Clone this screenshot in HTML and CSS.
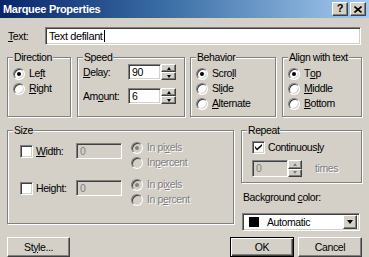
FILE: index.html
```html
<!DOCTYPE html>
<html>
<head>
<meta charset="utf-8">
<title>Marquee Properties</title>
<link rel="stylesheet" href="styles.css">
</head>
<body>
<div class="window">
  <div class="titlebar">
    <span class="title">Marquee Properties</span>
    <div class="tb-btns">
      <span class="tb-btn help">?</span>
      <span class="tb-btn close"><svg width="8" height="7" viewBox="0 0 8 7"><path d="M0.5 0.5 L7.5 6.5 M7.5 0.5 L0.5 6.5" stroke="#000" stroke-width="1.6"/></svg></span>
    </div>
  </div>
  <div class="body">
    <div class="text-row">
      <span class="lbl"><u>T</u>ext:</span>
      <div class="field text-field">Text defilant<span class="caret"></span></div>
    </div>

    <div class="row1">
      <div class="group g-dir">
        <span class="legend">Direction</span>
        <div class="opts">
          <div class="opt"><span class="radio on"></span>Le<u>f</u>t</div>
          <div class="opt"><span class="radio"></span><u>R</u>ight</div>
        </div>
      </div>
      <div class="group g-speed">
        <span class="legend">Speed</span>
        <div class="spin-row">
          <span class="spin-lbl"><u>D</u>elay:</span>
          <div class="field num">90</div>
          <div class="spin"><span class="spin-btn"><span class="arr up"></span></span><span class="spin-btn"><span class="arr down"></span></span></div>
        </div>
        <div class="spin-row">
          <span class="spin-lbl">Am<u>o</u>unt:</span>
          <div class="field num">6</div>
          <div class="spin"><span class="spin-btn"><span class="arr up"></span></span><span class="spin-btn"><span class="arr down"></span></span></div>
        </div>
      </div>
      <div class="group g-beh">
        <span class="legend">Behavior</span>
        <div class="opts">
          <div class="opt"><span class="radio on"></span>Scro<u>l</u>l</div>
          <div class="opt"><span class="radio"></span>Sl<u>i</u>de</div>
          <div class="opt"><span class="radio"></span><u>A</u>lternate</div>
        </div>
      </div>
      <div class="group g-align">
        <span class="legend">Align with text</span>
        <div class="opts">
          <div class="opt"><span class="radio on"></span>T<u>o</u>p</div>
          <div class="opt"><span class="radio"></span><u>M</u>iddle</div>
          <div class="opt"><span class="radio"></span><u>B</u>ottom</div>
        </div>
      </div>
    </div>

    <div class="row2">
      <div class="group g-size">
        <span class="legend">Size</span>
        <div class="size-row">
          <div class="size-left">
            <span class="check"></span>
            <span class="size-lbl"><u>W</u>idth:</span>
            <div class="field dis size-field">0</div>
          </div>
          <div class="opts size-opts">
            <div class="opt dis-text"><span class="radio on dis"></span>In pi<u>x</u>els</div>
            <div class="opt dis-text"><span class="radio dis"></span>In <u>p</u>ercent</div>
          </div>
        </div>
        <div class="size-row">
          <div class="size-left">
            <span class="check"></span>
            <span class="size-lbl">Hei<u>g</u>ht:</span>
            <div class="field dis size-field">0</div>
          </div>
          <div class="opts size-opts">
            <div class="opt dis-text"><span class="radio on dis"></span>In pi<u>x</u>els</div>
            <div class="opt dis-text"><span class="radio dis"></span>In p<u>e</u>rcent</div>
          </div>
        </div>
      </div>

      <div class="right-col">
        <div class="group g-repeat">
          <span class="legend">Repeat</span>
          <div class="opt rep-opt"><span class="check on"><svg width="7" height="7" viewBox="0 0 7 7"><path d="M0 2 L2 4.5 L7 0 L7 2 L2 6.5 L0 4 Z" fill="#000"/></svg></span>Continuous<u>l</u>y</div>
          <div class="rep-times">
            <div class="field dis rep-field">0</div>
            <div class="spin"><span class="spin-btn"><span class="arr up dim"></span></span><span class="spin-btn"><span class="arr down dim"></span></span></div>
            <span class="dis-text times">times</span>
          </div>
        </div>
        <div class="bg-lbl">Background <u>c</u>olor:</div>
        <div class="field select">
          <span class="swatch"></span>
          <span class="sel-text">Automatic</span>
          <span class="drop-btn"><span class="arr down big"></span></span>
        </div>
      </div>
    </div>

    <div class="buttons">
      <div class="btn btn-style">St<u>y</u>le...</div>
      <div class="btn-group">
        <div class="btn btn-ok default">OK</div>
        <div class="btn btn-cancel">Cancel</div>
      </div>
    </div>
  </div>
</div>
</body>
</html>
```

FILE: styles.css
```css
* { box-sizing: border-box; }
html, body { margin: 0; padding: 0; background: #d4d0c8; }
.window {
  width: 369px;
  height: 257px;
  overflow: hidden;
  background: #d4d0c8;
  font-family: "Liberation Sans", Arial, sans-serif;
  font-size: 10.5px;
  letter-spacing: -0.4px;
  color: #000;
  line-height: 13px;
}
u { text-decoration: underline; text-underline-offset: 1px; }

/* title bar */
.titlebar {
  height: 18px;
  background: linear-gradient(to right, #0a246a 0%, #3a6ea5 45%, #a6caf0 100%);
  display: flex;
  align-items: center;
  justify-content: space-between;
  padding: 0 3px 0 3px;
}
.title { color: #fff; font-weight: bold; font-size: 11px; letter-spacing: -0.3px; }
.tb-btns { display: flex; gap: 2px; }
.tb-btn {
  width: 16px; height: 14px;
  background: #d4d0c8;
  border: 1px solid; border-color: #fff #404040 #404040 #fff;
  box-shadow: inset -1px -1px 0 #808080;
  display: flex; align-items: center; justify-content: center;
  font-weight: bold; font-size: 11px; line-height: 11px; letter-spacing: 0;
}
.help { padding-bottom: 1px; }

.body { padding: 9px 7px 0 7px; }

/* text row */
.text-row { display: flex; align-items: center; height: 18px; }
.lbl { width: 38px; padding-left: 1px; }
.field {
  background: #fff;
  border: 1px solid; border-color: #808080 #fff #fff #808080;
  box-shadow: inset 1px 1px 0 #404040, inset -1px -1px 0 #d4d0c8;
  display: flex; align-items: center;
  padding: 0 3px;
}
.text-field { width: 316px; height: 18px; font-size: 11px; }
.caret { display: inline-block; width: 1px; height: 12px; background: #000; margin-left: 1px; }

/* group boxes */
.group {
  position: relative;
  border: 1px solid #808080;
  box-shadow: 1px 1px 0 #fff, inset 1px 1px 0 #fff;
}
.legend {
  position: absolute;
  top: -7px; left: 5px;
  padding: 0 1px;
  background: #d4d0c8;
  line-height: 13px;
  white-space: nowrap;
}

.row1 { display: flex; margin-top: 12px; height: 60px; }
.g-dir { width: 64px; }
.g-speed { width: 108px; margin-left: 6px; }
.g-beh { width: 86px; margin-left: 5px; }
.g-align { width: 80px; margin-left: 6px; }

.opts { display: flex; flex-direction: column; padding: 8px 0 0 5px; }
.opt { display: flex; align-items: center; height: 15px; white-space: nowrap; }

.radio {
  position: relative;
  width: 12px; height: 12px; flex: none;
  border-radius: 50%;
  background: #fff;
  border: 1px solid; border-color: #808080 #fff #fff #808080;
  box-shadow: inset 1px 1px 0 #404040, inset -1px -1px 0 #d4d0c8;
  margin-right: 4px;
}
.radio.on::after {
  content: ""; position: absolute;
  left: 3px; top: 3px; width: 4px; height: 4px;
  border-radius: 50%; background: #000;
}
.radio.dis { background: #d4d0c8; }
.radio.dis.on::after { background: #808080; }

.dis-text { color: #808080; text-shadow: 1px 1px 0 #fff; }

/* speed */
.g-speed { padding: 6px 0 0 5px; }
.spin-row { display: flex; align-items: center; height: 16px; margin-bottom: 8px; }
.spin-lbl { width: 45px; }
.num { width: 33px; height: 16px; }
.spin { display: flex; flex-direction: column; width: 15px; height: 16px; }
.spin-btn {
  flex: 1;
  background: #d4d0c8;
  border: 1px solid; border-color: #fff #404040 #404040 #fff;
  box-shadow: inset -1px -1px 0 #808080;
  display: flex; align-items: center; justify-content: center;
}
.arr { width: 0; height: 0; border-left: 2.5px solid transparent; border-right: 2.5px solid transparent; }
.arr.up { border-bottom: 3px solid #000; }
.arr.down { border-top: 3px solid #000; }
.arr.dim.up { border-bottom-color: #808080; }
.arr.dim.down { border-top-color: #808080; }

/* row 2 */
.row2 { display: flex; margin-top: 13px; }
.g-size { width: 227px; height: 94px; padding: 9px 0 0 12px; }
.size-row { display: flex; height: 30px; margin-bottom: 7px; }
.size-left { display: flex; align-items: center; height: 16px; margin-top: 3px; width: 111px; }
.check {
  width: 13px; height: 13px; flex: none;
  background: #fff;
  border: 1px solid; border-color: #808080 #fff #fff #808080;
  box-shadow: inset 1px 1px 0 #404040, inset -1px -1px 0 #d4d0c8;
  display: flex; align-items: center; justify-content: center;
}
.size-lbl { width: 43px; padding-left: 3px; }
.dis { background: #d4d0c8; color: #808080; }
.size-field { width: 46px; height: 16px; }
.size-opts { padding: 0; }

.right-col { width: 121px; margin-left: 7px; }
.g-repeat { height: 53px; padding: 9px 0 0 10px; }
.rep-opt .check { margin-right: 3px; }
.rep-times { display: flex; align-items: center; margin-top: 5px; }
.rep-field { width: 36px; height: 17px; }
.rep-times .spin { width: 14px; height: 17px; }
.times { margin-left: 13px; }
.bg-lbl { margin-top: 8px; padding-left: 2px; height: 14px; }
.select { margin-top: 8px; margin-left: 1px; width: 118px; height: 18px; padding: 0 2px 0 6px; }
.swatch { width: 10px; height: 10px; background: #000; flex: none; }
.sel-text { margin-left: 8px; flex: 1; }
.drop-btn {
  width: 14px; height: 14px;
  background: #d4d0c8;
  border: 1px solid; border-color: #fff #404040 #404040 #fff;
  box-shadow: inset -1px -1px 0 #808080;
  display: flex; align-items: center; justify-content: center;
}
.arr.big { border-left-width: 3.5px; border-right-width: 3.5px; border-top-width: 4px; }

/* buttons */
.buttons { display: flex; justify-content: space-between; margin-top: 6px; }
.btn {
  height: 20px;
  background: #d4d0c8;
  border: 1px solid; border-color: #fff #404040 #404040 #fff;
  box-shadow: inset -1px -1px 0 #808080;
  display: flex; align-items: center; justify-content: center;
}
.btn-style { width: 63px; }
.btn-group { display: flex; gap: 4px; }
.btn-ok { width: 64px; }
.btn-cancel { width: 64px; }
.btn.default {
  border-color: #000;
  box-shadow: inset 1px 1px 0 #fff, inset -1px -1px 0 #404040, inset -2px -2px 0 #808080;
}
```
